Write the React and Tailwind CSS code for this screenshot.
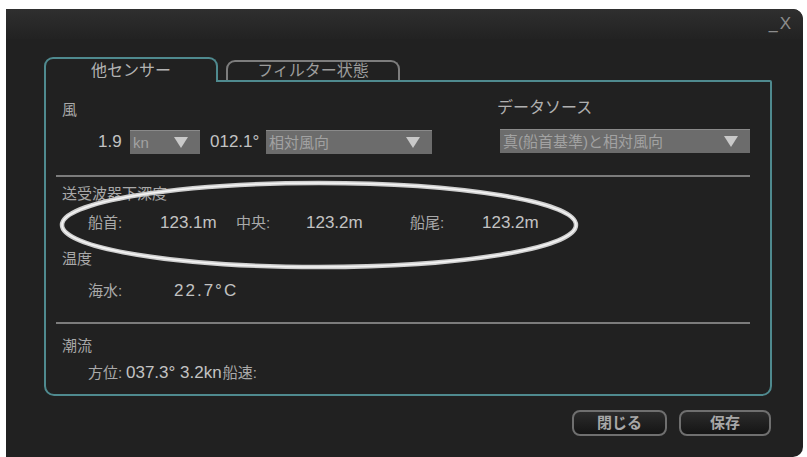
const font = { fontFamily: '"Liberation Sans", "Noto Sans CJK JP", sans-serif' }

function Select({ w, label }) {
  return (
    <div
      className={`flex h-[24px] items-center justify-between border-t border-[#8a8a8a] bg-[#6c6c6c] pl-[3px] pr-[12px] text-[15px] text-[#a2a2a2] ${w}`}
    >
      <span className="leading-none">{label}</span>
      <svg width="14" height="11" viewBox="0 0 14 11">
        <path d="M0 0 H14 L7 11 Z" fill="#c9c9c9" />
      </svg>
    </div>
  )
}

function Label({ children, className = '' }) {
  return <div className={`h-[20px] pl-[6px] text-[15px] leading-[20px] text-[#a9a9a9] ${className}`}>{children}</div>
}

function Sep({ className = '' }) {
  return <div className={`h-[2px] bg-[#7c7c7c] ${className}`} />
}

export default function App() {
  return (
    <div className="relative h-[457px] w-[807px] overflow-hidden bg-white" style={font}>
      <div className="ml-[6px] mt-[9px] h-[448px] w-[797px] rounded-tr-[10px] rounded-br-[10px] bg-[#212121]">
        {/* title bar */}
        <div className="flex h-[30px] items-start justify-end rounded-tr-[10px] bg-gradient-to-b from-[#2f2f2f] to-[#222222] pr-[12px] pt-[5px]">
          <span className="text-[16px] leading-[20px] text-[#8c8c8c]">_</span>
          <span className="ml-[2px] text-[17px] font-light leading-[20px] text-[#8c8c8c]">X</span>
        </div>

        <div className="ml-[38px] mt-[18px] w-[728px]">
          {/* tabs */}
          <div className="relative z-10 flex h-[23px] items-end">
            <div className="-mb-[2px] flex h-[25px] w-[174px] items-center justify-center rounded-t-[9px] border-2 border-b-0 border-[#4f8a8f] bg-[#212121] pt-[1px] text-[16px] text-[#b4b4b4]">
              他センサー
            </div>
            <div className="ml-[8px] flex h-[20px] w-[174px] items-center justify-center rounded-t-[9px] border-2 border-b-0 border-[#7d7d7d] text-[16px] text-[#9c9c9c]">
              フィルター状態
            </div>
          </div>

          {/* panel */}
          <div className="h-[316px] rounded-b-[10px] rounded-tr-[2px] border-2 border-[#4f8a8f] pl-[10px] pr-[20px] pt-[18px]">
            <div className="flex">
              <div className="w-[441px]">
                <Label>風</Label>
                <div className="mt-[10px] flex h-[24px] items-center text-[17px] text-[#c3c3c3]">
                  <span className="ml-[42px] w-[32px]">1.9</span>
                  <Select w="w-[70px]" label="kn" />
                  <span className="ml-[10px] w-[56px]">012.1°</span>
                  <Select w="w-[166px]" label="相対風向" />
                </div>
              </div>
              <div className="-mt-[2px]">
                <Label className="!pl-0 text-[16px] text-[#b0b0b0]">データソース</Label>
                <div className="ml-[3px] mt-[11px]">
                  <Select w="w-[250px]" label="真(船首基準)と相対風向" />
                </div>
              </div>
            </div>

            <Sep className="mt-[21px]" />

            <Label className="mt-[7px]">送受波器下深度</Label>
            <div className="mt-[8px] flex h-[22px] items-center pl-[32px] text-[17px] text-[#c3c3c3]">
              <span className="w-[72px] text-[15px] text-[#a9a9a9]">船首:</span>
              <span className="w-[76px]">123.1m</span>
              <span className="w-[70px] text-[15px] text-[#a9a9a9]">中央:</span>
              <span className="w-[104px]">123.2m</span>
              <span className="w-[72px] text-[15px] text-[#a9a9a9]">船尾:</span>
              <span>123.2m</span>
            </div>

            <Label className="mt-[15px]">温度</Label>
            <div className="mt-[11px] flex h-[22px] items-center pl-[32px] text-[17px] text-[#c3c3c3]">
              <span className="w-[86px] text-[15px] text-[#a9a9a9]">海水:</span>
              <span className="tracking-[2px]">22.7°C</span>
            </div>

            <Sep className="mt-[20px]" />

            <Label className="mt-[12px]">潮流</Label>
            <div className="mt-[6px] flex h-[22px] items-center pl-[32px] text-[17px] text-[#c3c3c3]">
              <span className="w-[38px] text-[15px] text-[#a9a9a9]">方位:</span>
              <span className="mr-[1px]">037.3° 3.2kn</span>
              <span className="text-[15px] text-[#a9a9a9]">船速:</span>
            </div>
          </div>

          {/* buttons */}
          <div className="mt-[14px] flex justify-end gap-[12px] pr-[1px]">
            <button className="flex h-[26px] w-[95px] items-center justify-center rounded-[8px] border-2 border-[#6f6f6f] bg-gradient-to-b from-[#2c2c2c] to-[#151515] text-[15px] font-bold text-[#a8a8a8]">
              閉じる
            </button>
            <button className="flex h-[26px] w-[92px] items-center justify-center rounded-[8px] border-2 border-[#6f6f6f] bg-gradient-to-b from-[#2c2c2c] to-[#151515] text-[15px] font-bold text-[#a8a8a8]">
              保存
            </button>
          </div>
        </div>
      </div>

      {/* hand-drawn highlight ring */}
      <svg className="pointer-events-none absolute left-0 top-0" width="807" height="457">
        <ellipse cx="319" cy="225" rx="257" ry="42" fill="none" stroke="#cfcfcf" strokeWidth="4.5" />
        <ellipse cx="319" cy="225" rx="257" ry="42" fill="none" stroke="#f4f4f4" strokeWidth="1.5" />
      </svg>
    </div>
  )
}
